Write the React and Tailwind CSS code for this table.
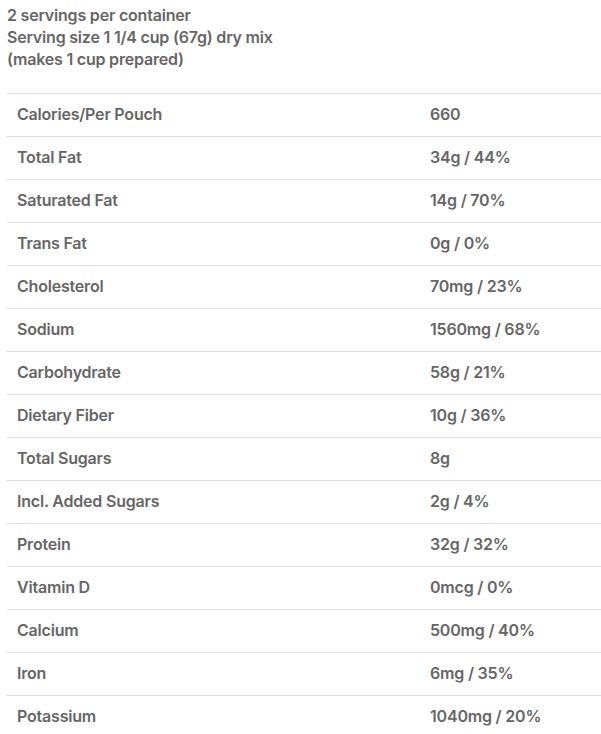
import React from 'react';

const rows = [
  ['Calories/Per Pouch', '660'],
  ['Total Fat', '34g / 44%'],
  ['Saturated Fat', '14g / 70%'],
  ['Trans Fat', '0g / 0%'],
  ['Cholesterol', '70mg / 23%'],
  ['Sodium', '1560mg / 68%'],
  ['Carbohydrate', '58g / 21%'],
  ['Dietary Fiber', '10g / 36%'],
  ['Total Sugars', '8g'],
  ['Incl. Added Sugars', '2g / 4%'],
  ['Protein', '32g / 32%'],
  ['Vitamin D', '0mcg / 0%'],
  ['Calcium', '500mg / 40%'],
  ['Iron', '6mg / 35%'],
  ['Potassium', '1040mg / 20%'],
];

const App = () => {
  return (
    <div className="bg-white text-[#666666] font-['Inter',sans-serif] font-semibold text-[16px] tracking-[-0.2px] pl-[7px] pt-[4px]">
      <div className="leading-[22px]">
        <p>2 servings per container</p>
        <p>Serving size 1 1/4 cup (67g) dry mix</p>
        <p>(makes 1 cup prepared)</p>
      </div>
      <table className="w-full mt-[23px] border-collapse">
        <tbody>
          {rows.map(([label, value]) => (
            <tr key={label} className="border-t border-[#dddddd] h-[43px]">
              <td className="pl-[10px] pb-[2px] w-[413px] align-middle">{label}</td>
              <td className="pl-[10px] pb-[2px] align-middle">{value}</td>
            </tr>
          ))}
        </tbody>
      </table>
    </div>
  );
};

export default App;
